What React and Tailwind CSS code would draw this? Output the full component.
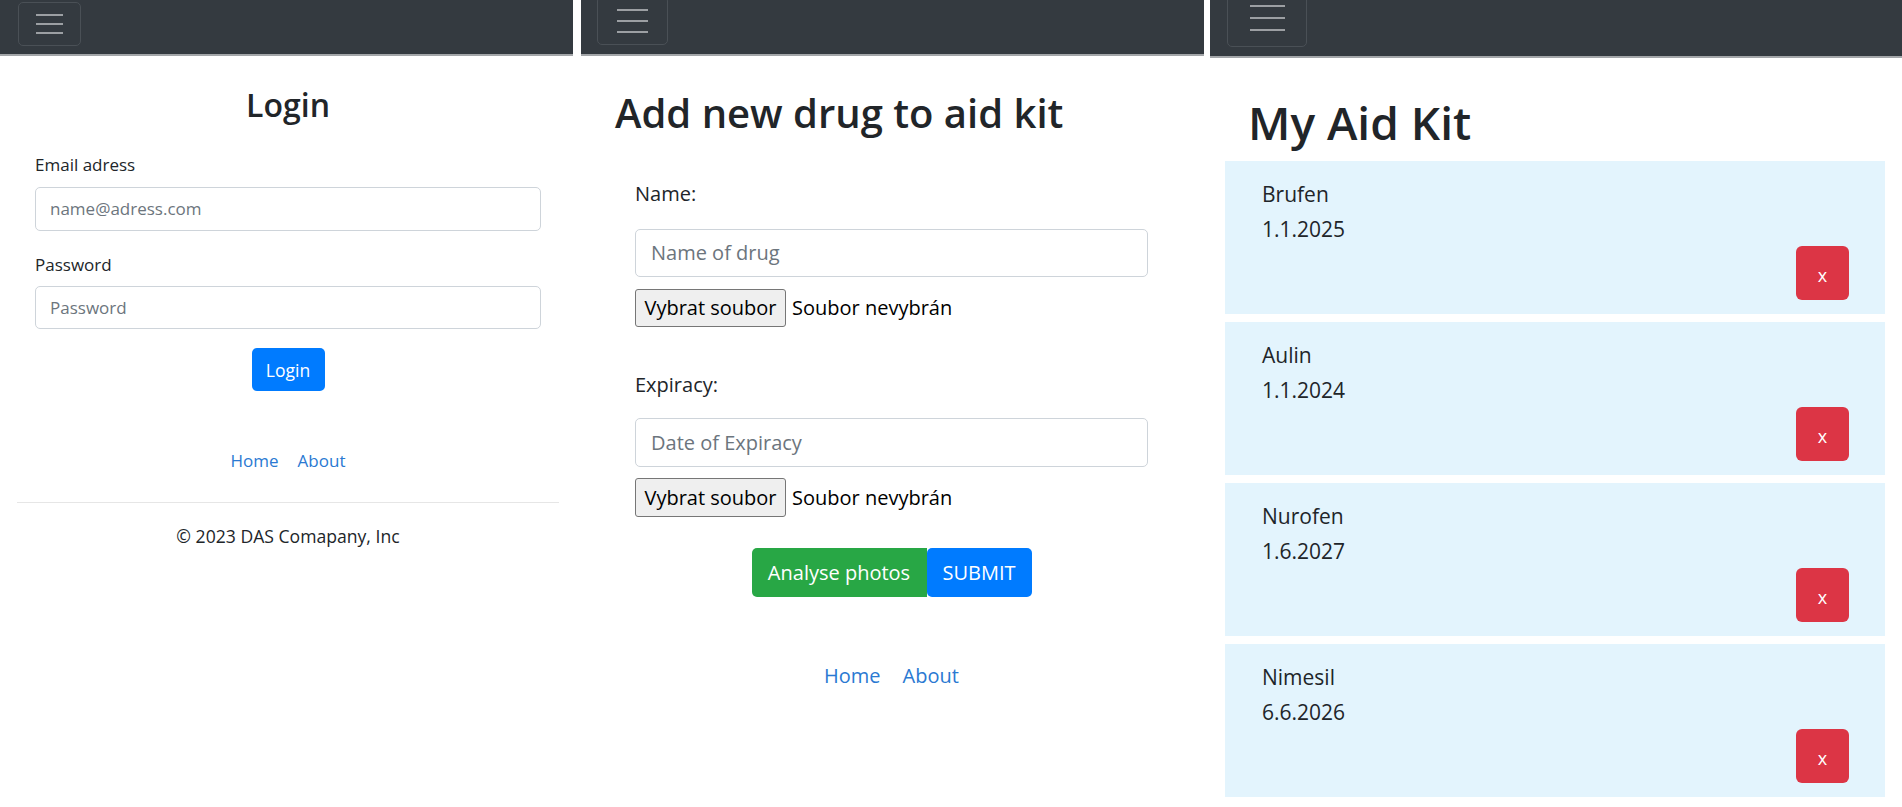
import React from 'react';

const drugs = [
  { name: "Brufen", date: "1.1.2025" },
  { name: "Aulin", date: "1.1.2024" },
  { name: "Nurofen", date: "1.6.2027" },
  { name: "Nimesil", date: "6.6.2026" },
];

// hamburger toggler used in every navbar
const Toggler = ({ className, lineClass, gapClass }) => (
  <div className={`border border-[#4a5056] rounded-[5px] flex flex-col items-center justify-center shrink-0 ${gapClass} ${className}`}>
    <span className={`block bg-[#9c9fa3] ${lineClass}`} />
    <span className={`block bg-[#9c9fa3] ${lineClass}`} />
    <span className={`block bg-[#9c9fa3] ${lineClass}`} />
  </div>
);

const LoginPanel = () => (
  <div className="w-[573px] shrink-0 flex flex-col">
    {/* navbar */}
    <div className="h-[56px] bg-[#343a40] border-b-2 border-[#a3a6a9] flex items-start pl-[18px] pt-[2px] overflow-hidden">
      <Toggler className="w-[63px] h-[44px]" lineClass="w-[27px] h-[2px]" gapClass="gap-[7.3px]" />
    </div>

    <div className="pl-[35px] pr-[32px] flex flex-col text-[17px] leading-[26px] text-[#212529]">
      <h2 className="mt-[30px] text-center text-[32px] leading-[38px] font-semibold">Login</h2>

      <label className="mt-[28px]">Email adress</label>
      <div className="mt-[9px] h-[44px] border border-[#ced4da] rounded-[5px] flex items-center pl-[14px] text-[#6c757d]">
        name@adress.com
      </div>

      <label className="mt-[21px]">Password</label>
      <div className="mt-[8px] h-[43px] border border-[#ced4da] rounded-[5px] flex items-center pl-[14px] text-[#6c757d]">
        Password
      </div>

      <button className="mt-[19px] self-center w-[73px] h-[43px] rounded-[5px] bg-[#007bff] text-white text-[17.5px]">
        Login
      </button>

      <div className="mt-[57px] flex justify-center gap-[19px] text-[#2a79d2]">
        <span>Home</span>
        <span>About</span>
      </div>
    </div>

    <div className="mt-[28px] ml-[17px] mr-[14px] h-px bg-[#e6e6e6]" />
    <p className="mt-[20px] pl-[35px] pr-[32px] text-center text-[17.6px] leading-[26px] text-[#212529]">
      © 2023 DAS Comapany, Inc
    </p>
  </div>
);

const FileRow = ({ className }) => (
  <div className={`flex items-center ${className}`}>
    <div className="w-[151px] h-full bg-[#efefef] border border-[#767676] rounded-[3px] flex items-center justify-center text-black">
      Vybrat soubor
    </div>
    <span className="ml-[6px] text-black">Soubor nevybrán</span>
  </div>
);

const AddPanel = () => (
  <div className="w-[623px] shrink-0 flex flex-col">
    <div className="h-[56px] bg-[#343a40] border-b-2 border-[#a3a6a9] flex items-start pl-[16px] overflow-hidden">
      <Toggler className="w-[71px] h-[49px] mt-[-4px]" lineClass="w-[31px] h-[2px]" gapClass="gap-[9px]" />
    </div>

    <h2 className="mt-[33px] pl-[34px] text-[40px] leading-[48px] font-semibold text-[#212529]">
      Add new drug to aid kit
    </h2>

    <div className="ml-[54px] w-[513px] flex flex-col text-[20px] leading-[30px] text-[#212529]">
      <label className="mt-[42px]">Name:</label>
      <div className="mt-[20px] h-[48px] border border-[#ced4da] rounded-[5px] flex items-center pl-[15px] text-[#6c757d]">
        Name of drug
      </div>
      <FileRow className="mt-[12px] h-[38px]" />

      <label className="mt-[43px]">Expiracy:</label>
      <div className="mt-[18px] h-[49px] border border-[#ced4da] rounded-[5px] flex items-center pl-[15px] text-[#6c757d]">
        Date of Expiracy
      </div>
      <FileRow className="mt-[11px] h-[39px]" />

      <div className="mt-[31px] flex justify-center">
        <button className="w-[175px] h-[49px] bg-[#28a745] text-white rounded-l-[5px]">Analyse photos</button>
        <button className="w-[105px] h-[49px] bg-[#007bff] text-white rounded-[5px]">SUBMIT</button>
      </div>

      <div className="mt-[64px] flex justify-center gap-[22px] text-[#2a79d2]">
        <span>Home</span>
        <span>About</span>
      </div>
    </div>
  </div>
);

const KitPanel = () => (
  <div className="w-[692px] shrink-0 flex flex-col">
    <div className="h-[58px] bg-[#343a40] border-b-2 border-[#a3a6a9] flex items-start pl-[17px] overflow-hidden">
      <Toggler className="w-[80px] h-[58px] mt-[-11px]" lineClass="w-[35px] h-[2.5px]" gapClass="gap-[9.3px]" />
    </div>

    <h1 className="mt-[37px] pl-[38px] text-[46px] leading-[55px] font-semibold text-[#212529]">My Aid Kit</h1>

    <div className="mt-[11px] ml-[15px] mr-[17px] flex flex-col gap-[8px]">
      {drugs.map((d) => (
        <div key={d.name} className="h-[153px] shrink-0 bg-[#e3f4fd] pl-[37px] pr-[36px] pt-[16px] flex flex-col text-[21px] leading-[35px] text-[#212529]">
          <span>{d.name}</span>
          <span>{d.date}</span>
          <button className="self-end mt-[-1px] w-[53px] h-[54px] rounded-[6px] bg-[#dc3545] text-white text-[18px] leading-none flex items-center justify-center pt-[3px]">
            x
          </button>
        </div>
      ))}
    </div>
  </div>
);

export default function App() {
  return (
    <div className="w-[1902px] h-[807px] overflow-hidden bg-white flex font-['Open_Sans',sans-serif]">
      <LoginPanel />
      <div className="w-[8px] shrink-0" />
      <AddPanel />
      <div className="w-[6px] shrink-0" />
      <KitPanel />
    </div>
  );
}
